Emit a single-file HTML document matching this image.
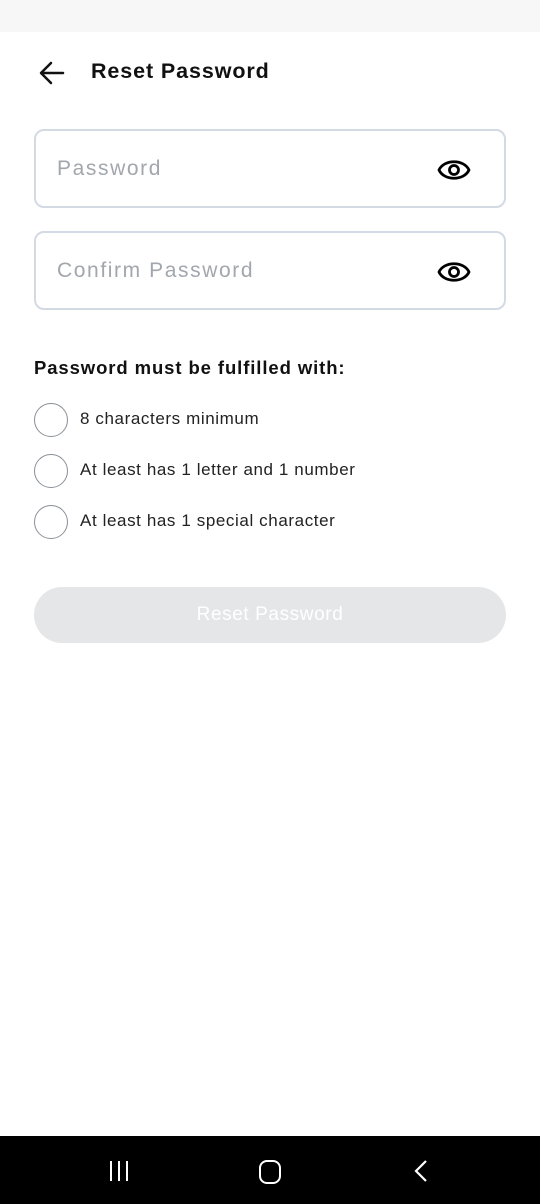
<!DOCTYPE html>
<html><head><style>
body{margin:0;width:540px;height:1204px;background:#fff;font-family:"Liberation Sans",sans-serif;position:relative;overflow:hidden}
.sb{position:absolute;top:0;left:0;width:540px;height:32px;background:#f7f7f7}
.abs{position:absolute}
.field{position:absolute;left:34px;width:472px;height:79px;border:2px solid #d3dae4;border-radius:10px;box-sizing:border-box}
.field span{position:absolute;left:21px;top:26px;font-size:21px;color:#a2a6ad;letter-spacing:1.6px}
.field svg{position:absolute;right:33px;top:26px}
.c{position:absolute;left:34px;width:34px;height:34px;border:1.5px solid #8a8f97;border-radius:50%;box-sizing:border-box}
.t{position:absolute;left:80px;font-size:17px;color:#222;letter-spacing:0.6px}
.nav{position:absolute;left:0;top:1136px;width:540px;height:68px;background:#000}
</style></head><body>
<div class="sb"></div>
<svg class="abs" style="left:38px;top:60px" width="28" height="26" viewBox="0 0 28 26"><path d="M25 13H4M13 3L3 13l10 10" stroke="#111" stroke-width="2.5" fill="none" stroke-linecap="round" stroke-linejoin="round"/></svg>
<div class="abs" style="left:91px;top:59px;font-size:21.5px;font-weight:bold;color:#111;letter-spacing:0.9px">Reset Password</div>
<div class="field" style="top:129px"><span>Password</span>
<svg width="34" height="26" viewBox="0 0 34 26"><path d="M2 13C7 2 27 2 32 13C27 24 7 24 2 13Z" stroke="#000" stroke-width="2.8" fill="none" stroke-linejoin="round"/><circle cx="17" cy="13" r="4.5" stroke="#000" stroke-width="2.8" fill="none"/></svg></div>
<div class="field" style="top:231px"><span>Confirm Password</span>
<svg width="34" height="26" viewBox="0 0 34 26"><path d="M2 13C7 2 27 2 32 13C27 24 7 24 2 13Z" stroke="#000" stroke-width="2.8" fill="none" stroke-linejoin="round"/><circle cx="17" cy="13" r="4.5" stroke="#000" stroke-width="2.8" fill="none"/></svg></div>
<div class="abs" style="left:34px;top:357px;font-size:18.5px;font-weight:bold;color:#111;letter-spacing:0.9px">Password must be fulfilled with:</div>
<div class="c" style="top:403px"></div><div class="t" style="top:409px">8 characters minimum</div>
<div class="c" style="top:454px"></div><div class="t" style="top:460px">At least has 1 letter and 1 number</div>
<div class="c" style="top:505px"></div><div class="t" style="top:511px">At least has 1 special character</div>
<div class="abs" style="left:34px;top:587px;width:472px;height:56px;border-radius:28px;background:#e5e6e8;color:#fff;font-size:19px;text-align:center;line-height:56px;letter-spacing:0.6px">Reset Password</div>
<div class="nav">
<svg class="abs" style="left:108px;top:24px" width="22" height="22"><path d="M3 1v20M11 1v20M19 1v20" stroke="#fff" stroke-width="2"/></svg>
<div class="abs" style="left:259px;top:24px;width:18px;height:20px;border:2px solid #fff;border-radius:8px"></div>
<svg class="abs" style="left:413px;top:23px" width="16" height="24"><path d="M13 2L3 12l10 10" stroke="#fff" stroke-width="2.2" fill="none"/></svg>
</div>
</body></html>
